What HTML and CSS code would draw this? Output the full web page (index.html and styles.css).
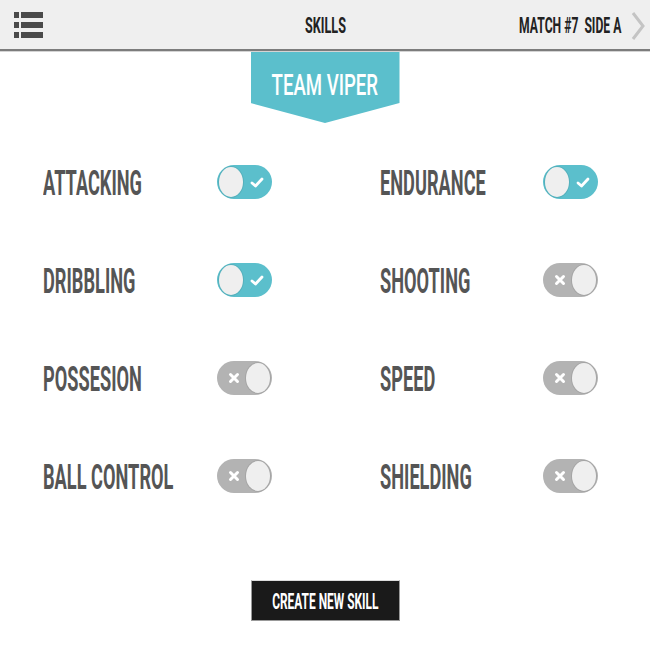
FILE: index.html
```html
<!DOCTYPE html>
<html>
<head>
<meta charset="utf-8">
<title>Skills</title>
<link rel="stylesheet" href="styles.css">
</head>
<body>
<header class="topbar">
  <div class="menu">
    <svg width="31" height="27" viewBox="0 0 31 27">
      <rect x="1" y="0" width="5" height="6" fill="#4a4a4a"/>
      <rect x="8" y="0" width="22" height="6" fill="#4a4a4a"/>
      <rect x="1" y="10" width="5" height="6" fill="#4a4a4a"/>
      <rect x="8" y="10" width="22" height="6" fill="#4a4a4a"/>
      <rect x="1" y="20" width="5" height="6" fill="#4a4a4a"/>
      <rect x="8" y="20" width="22" height="6" fill="#4a4a4a"/>
    </svg>
  </div>
  <h1 class="title"><span class="sq sq-head">SKILLS</span></h1>
  <div class="match">
    <span class="sq sq-head sq-right">MATCH #7&nbsp;&nbsp;SIDE A</span>
    <svg class="chev" width="14" height="28" viewBox="0 0 14 28">
      <polyline points="2,1 12,14 2,27" fill="none" stroke="#c4c4c4" stroke-width="3"/>
    </svg>
  </div>
</header>

<div class="banner"><span class="sq sq-banner">TEAM VIPER</span></div>

<section class="skills">
  <div class="skill"><span class="name"><span class="sq sq-label">ATTACKING</span></span><span class="toggle on"><span class="knob"></span><svg class="mark" width="14" height="11" viewBox="0 0 14 11"><polyline points="2,6 5.5,9 12,2" fill="none" stroke="#fff" stroke-width="2.8" stroke-linecap="round" stroke-linejoin="round"/></svg></span></div>
  <div class="skill"><span class="name"><span class="sq sq-label">ENDURANCE</span></span><span class="toggle on"><span class="knob"></span><svg class="mark" width="14" height="11" viewBox="0 0 14 11"><polyline points="2,6 5.5,9 12,2" fill="none" stroke="#fff" stroke-width="2.8" stroke-linecap="round" stroke-linejoin="round"/></svg></span></div>
  <div class="skill"><span class="name"><span class="sq sq-label">DRIBBLING</span></span><span class="toggle on"><span class="knob"></span><svg class="mark" width="14" height="11" viewBox="0 0 14 11"><polyline points="2,6 5.5,9 12,2" fill="none" stroke="#fff" stroke-width="2.8" stroke-linecap="round" stroke-linejoin="round"/></svg></span></div>
  <div class="skill"><span class="name"><span class="sq sq-label">SHOOTING</span></span><span class="toggle off"><svg class="mark" width="12" height="12" viewBox="0 0 12 12"><path d="M2.5 2.5L9.5 9.5M9.5 2.5L2.5 9.5" stroke="#fff" stroke-width="3" stroke-linecap="round"/></svg><span class="knob"></span></span></div>
  <div class="skill"><span class="name"><span class="sq sq-label">POSSESION</span></span><span class="toggle off"><svg class="mark" width="12" height="12" viewBox="0 0 12 12"><path d="M2.5 2.5L9.5 9.5M9.5 2.5L2.5 9.5" stroke="#fff" stroke-width="3" stroke-linecap="round"/></svg><span class="knob"></span></span></div>
  <div class="skill"><span class="name"><span class="sq sq-label">SPEED</span></span><span class="toggle off"><svg class="mark" width="12" height="12" viewBox="0 0 12 12"><path d="M2.5 2.5L9.5 9.5M9.5 2.5L2.5 9.5" stroke="#fff" stroke-width="3" stroke-linecap="round"/></svg><span class="knob"></span></span></div>
  <div class="skill"><span class="name"><span class="sq sq-label">BALL CONTROL</span></span><span class="toggle off"><svg class="mark" width="12" height="12" viewBox="0 0 12 12"><path d="M2.5 2.5L9.5 9.5M9.5 2.5L2.5 9.5" stroke="#fff" stroke-width="3" stroke-linecap="round"/></svg><span class="knob"></span></span></div>
  <div class="skill"><span class="name"><span class="sq sq-label">SHIELDING</span></span><span class="toggle off"><svg class="mark" width="12" height="12" viewBox="0 0 12 12"><path d="M2.5 2.5L9.5 9.5M9.5 2.5L2.5 9.5" stroke="#fff" stroke-width="3" stroke-linecap="round"/></svg><span class="knob"></span></span></div>
</section>

<div class="actions">
  <button class="create"><span class="sq sq-btn">CREATE NEW SKILL</span></button>
</div>
</body>
</html>
```

FILE: styles.css
```css
* { box-sizing: border-box; }

html, body {
  margin: 0;
  padding: 0;
  background: #ffffff;
  font-family: Roboto, "Liberation Sans", sans-serif;
}

body {
  width: 650px;
  height: 650px;
  overflow: hidden;
}

.sq {
  display: inline-block;
  white-space: nowrap;
  line-height: 1;
  font-weight: 700;
}

.topbar {
  height: 51px;
  background: #efefef;
  border-bottom: 2px solid #7c7c7c;
  box-shadow: 0 1px 0 #d4d4d4;
  display: grid;
  grid-template-columns: 1fr auto 1fr;
  align-items: center;
  padding: 2px 5px 0 5px;
}

.menu {
  display: flex;
  align-items: center;
  padding-left: 8px;
}
.menu svg { display: block; }

.title {
  margin: 0;
  font-size: inherit;
  font-weight: inherit;
  text-align: center;
}

.sq-head {
  font-size: 22.5px;
  color: #222;
  transform: scaleX(0.56);
}

.match {
  display: flex;
  align-items: center;
  justify-content: flex-end;
  gap: 10px;
}
.sq-right {
  transform-origin: right center;
  transform: scaleX(0.54);
}
.chev { display: block; }

.banner {
  width: 149px;
  height: 71px;
  margin: 1px auto 0;
  background: #5bbfcc;
  clip-path: polygon(0 0, 100% 0, 100% 51px, 50% 71px, 0 51px);
  display: flex;
  justify-content: center;
  padding-top: 18px;
}

.sq-banner {
  font-size: 30px;
  font-weight: 500;
  color: #ffffff;
  transform: scaleX(0.62);
}

.skills {
  display: grid;
  grid-template-columns: 229px 218px;
  grid-auto-rows: 98px;
  column-gap: 108px;
  padding-left: 43px;
  margin-top: 10px;
}

.skill {
  display: grid;
  grid-template-columns: minmax(0, 1fr) 55px;
  align-items: center;
}

.name {
  min-width: 0;
  overflow: visible;
  white-space: nowrap;
}

.sq-label {
  font-size: 35px;
  color: #555555;
  transform: scaleX(0.52);
  transform-origin: left center;
  padding-top: 3px;
}

.toggle {
  width: 55px;
  height: 34px;
  border-radius: 17px;
  display: flex;
  align-items: center;
  padding: 2px;
}
.toggle.on { background: #5bbfcc; }
.toggle.off { background: #b3b3b3; }

.knob {
  width: 24px;
  height: 30px;
  border-radius: 50%;
  background: #efefef;
  box-shadow: 0 0 0 1px rgba(0, 0, 0, 0.08);
  flex: none;
}

.mark { display: block; flex: none; }
.toggle.on .mark { margin-left: 7px; }
.toggle.off .mark { margin-left: 9px; margin-right: auto; }

.actions {
  display: flex;
  justify-content: center;
  margin-top: 55px;
}

.create {
  width: 149px;
  height: 41px;
  background: #1a1a1a;
  border: 1px solid #999;
  border-top-color: #ddd;
  padding: 0;
  display: flex;
  align-items: center;
  justify-content: center;
  font-family: inherit;
}

.sq-btn {
  font-size: 22.5px;
  color: #ffffff;
  transform: scaleX(0.53);
  padding-top: 2px;
}
```
